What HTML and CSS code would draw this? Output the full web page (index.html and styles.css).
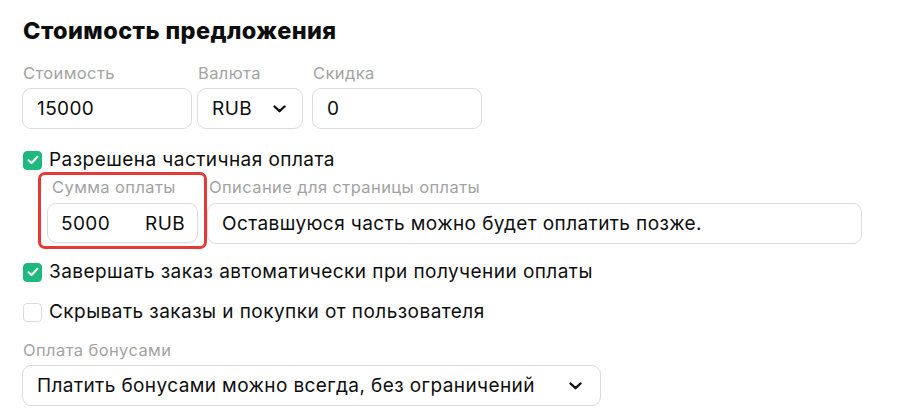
FILE: index.html
```html
<!DOCTYPE html>
<html lang="ru">
<head>
<meta charset="utf-8">
<link rel="stylesheet" href="styles.css">
</head>
<body>
<div class="page">
  <h1 class="title">Стоимость предложения</h1>
  <div class="row-top">
    <div class="field w170">
      <div class="label">Стоимость</div>
      <div class="input">15000</div>
    </div>
    <div class="field w106 ml5">
      <div class="label">Валюта</div>
      <div class="input select">RUB
        <svg class="chev" width="13" height="8" viewBox="0 0 13 8"><path d="M1.5 1.5 L6.5 6.2 L11.5 1.5" fill="none" stroke="#111" stroke-width="2.4" stroke-linecap="round" stroke-linejoin="round"/></svg>
      </div>
    </div>
    <div class="field w170 ml9">
      <div class="label">Скидка</div>
      <div class="input">0</div>
    </div>
  </div>

  <label class="check first">
    <span class="box on"><svg width="12" height="10" viewBox="0 0 12 10"><path d="M1.5 5.2 L4.6 8 L10.5 1.8" fill="none" stroke="#fff" stroke-width="2" stroke-linecap="round" stroke-linejoin="round"/></svg></span>
    <span class="check-text">Разрешена частичная оплата</span>
  </label>

  <div class="row-part">
    <div class="highlight">
      <div class="label">Сумма оплаты</div>
      <div class="input sum"><span>5000</span><span>RUB</span></div>
    </div>
    <div class="field grow">
      <div class="label">Описание для страницы оплаты</div>
      <div class="input desc">Оставшуюся часть можно будет оплатить позже.</div>
    </div>
  </div>

  <label class="check second">
    <span class="box on"><svg width="12" height="10" viewBox="0 0 12 10"><path d="M1.5 5.2 L4.6 8 L10.5 1.8" fill="none" stroke="#fff" stroke-width="2" stroke-linecap="round" stroke-linejoin="round"/></svg></span>
    <span class="check-text">Завершать заказ автоматически при получении оплаты</span>
  </label>

  <label class="check third">
    <span class="box"></span>
    <span class="check-text">Скрывать заказы и покупки от пользователя</span>
  </label>

  <div class="field bonus">
    <div class="label">Оплата бонусами</div>
    <div class="input select wide">Платить бонусами можно всегда, без ограничений
      <svg class="chev" width="13" height="8" viewBox="0 0 13 8"><path d="M1.5 1.5 L6.5 6.2 L11.5 1.5" fill="none" stroke="#111" stroke-width="2.4" stroke-linecap="round" stroke-linejoin="round"/></svg>
    </div>
  </div>
</div>
</body>
</html>
```

FILE: styles.css
```css
* { box-sizing: border-box; }
html, body { margin: 0; padding: 0; background: #fff; }
body {
  font-family: Inter, "Noto Sans", sans-serif;
  color: #0d0d0d;
  width: 905px;
  height: 419px;
  overflow: hidden;
}
.page { padding: 17px 0 0 22px; }
.title {
  margin: 0;
  font-size: 23.5px;
  line-height: 28px;
  font-weight: 800;
  padding-left: 1px;
  letter-spacing: 0.4px;
}
.row-top { display: flex; margin-top: 18px; }
.field { display: flex; flex-direction: column; }
.w170 { width: 170px; }
.w106 { width: 106px; }
.ml5 { margin-left: 5px; }
.ml9 { margin-left: 9px; }
.label {
  font-size: 16.5px;
  line-height: 20px;
  letter-spacing: 0.4px;
  color: #a3a3a3;
  padding-left: 1px;
  margin-bottom: 5px;
  white-space: nowrap;
}
.input {
  height: 41px;
  border: 1px solid #dcdcdc;
  border-radius: 9px;
  display: flex;
  align-items: center;
  padding: 0 14px;
  font-size: 19px;
  letter-spacing: 0.4px;
  white-space: nowrap;
}
.select { justify-content: space-between; padding-right: 16px; }
.chev { flex: none; }
.check {
  display: flex; align-items: center; gap: 7px;
  font-size: 19px; line-height: 22px; letter-spacing: 0.45px;
  padding-left: 1px;
}
.check.first { margin-top: 20px; }
.check.second { margin-top: 12px; }
.check.third { margin-top: 18px; }
.box {
  width: 19px; height: 19px;
  border-radius: 4px;
  border: 1px solid #dcdcdc;
  display: flex; align-items: center; justify-content: center;
  flex: none;
}
.box.on { background: #1fb880; border-color: #1fb880; }
.row-part { display: flex; margin-top: 1px; margin-left: 16px; }
.highlight {
  width: 169px;
  border: 3px solid #e53935;
  border-radius: 7px;
  padding: 2px 6px 3px 6px;
  display: flex; flex-direction: column;
}
.highlight .label { padding-left: 5px; margin-bottom: 6px; }
.sum { justify-content: space-between; padding: 0 12px 0 13px; height: 40px; }
.grow { flex: none; width: 655px; padding-top: 5px; }
.grow .label { padding-left: 2px; margin-bottom: 6px; }
.desc { height: 41px; }
.bonus { margin-top: 17px; }
.wide { width: 579px; padding-right: 18px; }
```
